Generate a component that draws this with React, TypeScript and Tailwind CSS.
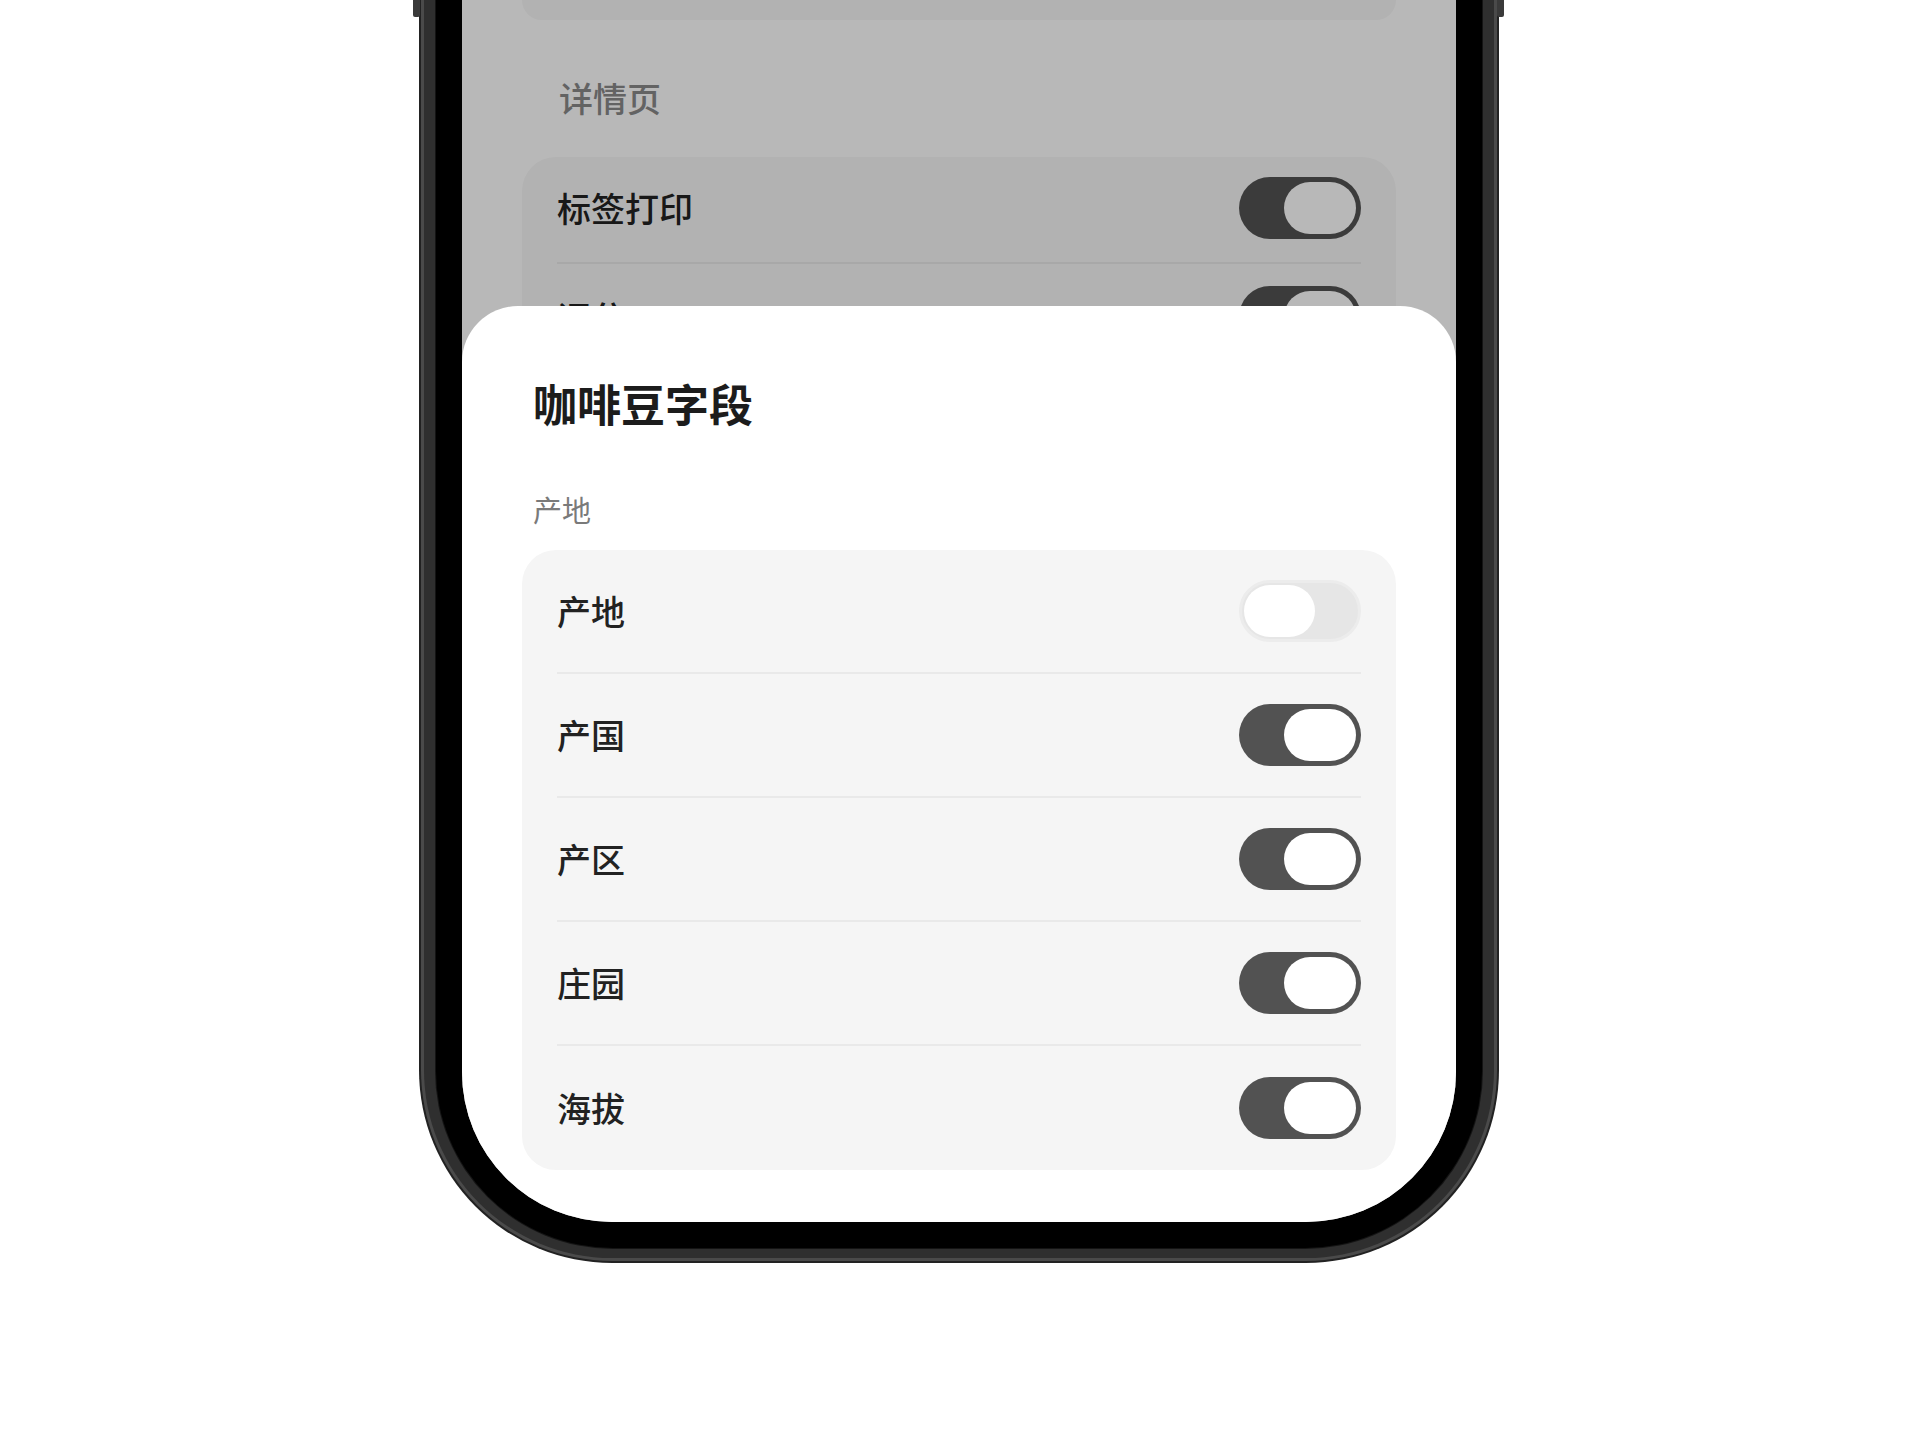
import React from "react";

const FONT = { fontFamily: '"Noto Sans CJK SC", "Noto Sans", sans-serif' };

function Toggle({ on }: { on: boolean }) {
  if (on) {
    return (
      <div className="w-[122px] h-[62px] rounded-full bg-[#525252] flex items-center justify-end pr-[5px] shrink-0">
        <div className="w-[72px] h-[52px] rounded-full bg-white" />
      </div>
    );
  }
  return (
    <div className="w-[122px] h-[62px] rounded-full bg-[#e6e6e6] border-[3px] border-[#ececec] flex items-center justify-start pl-[2px] shrink-0">
      <div className="w-[71px] h-[52px] rounded-full bg-white" />
    </div>
  );
}

function Row({ label, on, last }: { label: string; on: boolean; last?: boolean }) {
  return (
    <div className="px-[35px]">
      <div className={`h-[124px] flex items-center justify-between ${last ? "" : "border-b-2 border-[#e9e9e9]"}`}>
        <span className="text-[34px] leading-[34px] font-medium text-[#222222]">{label}</span>
        <Toggle on={on} />
      </div>
    </div>
  );
}

export default function App() {
  const rows = [
    { label: "产地", on: false },
    { label: "产国", on: true },
    { label: "产区", on: true },
    { label: "庄园", on: true },
    { label: "海拔", on: true },
  ];
  return (
    <div className="w-[1920px] h-[1440px] bg-white overflow-hidden relative" style={FONT}>
      {/* side buttons */}
      <div className="absolute left-[413px] top-0 w-[7px] h-[17px] bg-[#3a3a3a] rounded-b-[2px]" />
      <div className="absolute left-[1497px] top-0 w-[7px] h-[17px] bg-[#3a3a3a] rounded-b-[2px]" />

      {/* phone */}
      <div className="ml-[419px] w-[1080px] h-[1263px] rounded-b-[193px] bg-[#222222] px-[2px] pb-[2px]">
        <div className="h-full rounded-b-[191px] bg-[#4a4a4a] px-[3px] pb-[3px]">
          <div className="h-full rounded-b-[188px] bg-[#2f2f2f] px-[11px] pb-[9px]">
            <div className="h-full rounded-b-[178px] bg-[#141414] px-[1px] pb-[1px]">
              <div className="h-full rounded-b-[177px] bg-black px-[26px] pb-[26px]">
                {/* screen */}
                <div className="relative h-full rounded-b-[150px] overflow-hidden bg-white">
                  {/* background page */}
                  <div className="flex flex-col">
                    <div className="mx-[60px] h-[20px] rounded-b-[34px] bg-[#f7f7f7]" />
                    <div className="mt-[61px] pl-[97px] text-[34px] leading-[34px] font-medium text-[#8a8a8a]">详情页</div>
                    <div className="mx-[60px] mt-[42px] rounded-[34px] bg-[#f7f7f7]">
                      <div className="px-[35px]">
                        <div className="pt-[20px] pb-[23px] flex items-center justify-between border-b-2 border-[#e9e9e9]">
                          <span className="text-[34px] leading-[34px] font-medium text-[#222222]">标签打印</span>
                          <Toggle on={true} />
                        </div>
                      </div>
                      <div className="px-[35px]">
                        <div className="pt-[22px] pb-[23px] flex items-center justify-between">
                          <span className="text-[34px] leading-[34px] font-medium text-[#222222]">评分</span>
                          <Toggle on={true} />
                        </div>
                      </div>
                      <div className="h-[200px]" />
                    </div>
                  </div>

                  {/* dim overlay */}
                  <div className="absolute inset-0 bg-black/[0.28]" />

                  {/* bottom sheet */}
                  <div className="absolute left-0 right-0 top-[306px] bottom-0 bg-white rounded-t-[56px] flex flex-col">
                    <div className="pt-[75px] pl-[71px] text-[44px] leading-[44px] font-bold text-[#1c1c1c]">咖啡豆字段</div>
                    <div className="mt-[70px] pl-[71px] text-[29px] leading-[29px] text-[#7a7a7a]">产地</div>
                    <div className="mx-[60px] mt-[26px] rounded-[34px] bg-[#f5f5f5]">
                      {rows.map((r, i) => (
                        <Row key={r.label} label={r.label} on={r.on} last={i === rows.length - 1} />
                      ))}
                    </div>
                  </div>
                </div>
              </div>
            </div>
          </div>
        </div>
      </div>
    </div>
  );
}
